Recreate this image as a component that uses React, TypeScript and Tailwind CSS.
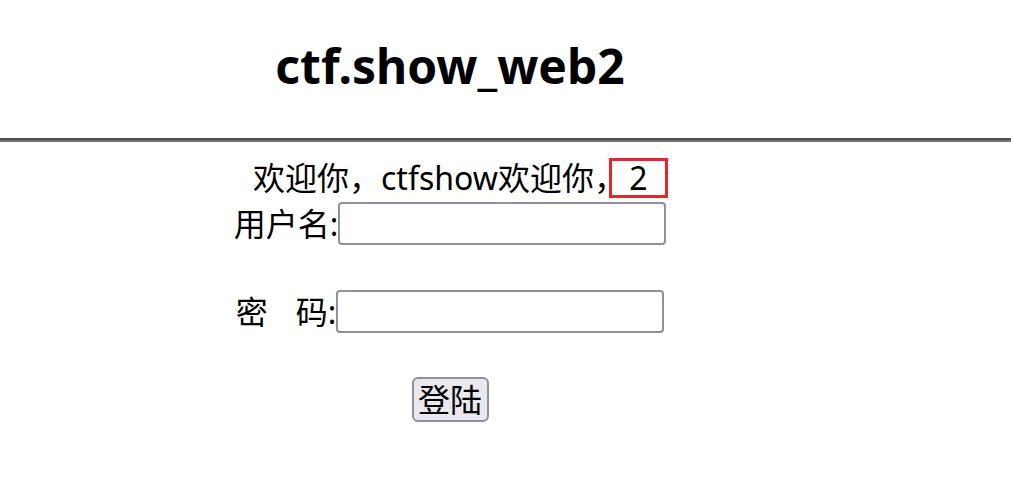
export default function App() {
  return (
    <div
      className="min-h-screen bg-white text-black"
      style={{ fontFamily: '"Noto Sans", "Noto Sans CJK SC", sans-serif' }}
    >
      <div className="w-[900px] h-[138px] pt-[42px] text-center">
        <h2 className="text-[48px] leading-[48px] font-bold">ctf.show_web2</h2>
      </div>
      <div className="w-full border-t-2 border-b-2 border-t-[#4f4f4f] border-b-[#727272]" />

      <div className="w-[900px] flex flex-col items-center text-[32px]">
        <div className="mt-[16px] h-[40px] self-start ml-[253px] flex items-center">
          <span className="leading-[40px]">欢迎你，ctfshow欢迎你</span>
          <span className="inline-block w-[15px] leading-[40px] overflow-visible whitespace-nowrap">，</span>
          <span className="w-[59px] h-[40px] border-[3px] border-[#e8242c] flex items-center justify-center leading-[34px]">
            2
          </span>
        </div>

        <div className="mt-[4px] flex items-center">
          <label className="leading-[43px]">用户名:</label>
          <input
            type="text"
            className="w-[328px] h-[43px] border-2 border-[#8f8f9d] rounded-[4px] bg-white outline-none"
          />
        </div>

        <div className="mt-[45px] flex items-center">
          <label className="leading-[43px] flex items-center">
            密<span className="inline-block w-[28px]" />码:
          </label>
          <input
            type="password"
            className="w-[328px] h-[43px] border-2 border-[#8f8f9d] rounded-[4px] bg-white outline-none"
          />
        </div>

        <button className="mt-[44px] w-[77px] h-[45px] border-2 border-[#8f8f9d] rounded-[6px] bg-[#e9e9ed] leading-[41px] text-[32px]">
          登陆
        </button>
      </div>
    </div>
  );
}
